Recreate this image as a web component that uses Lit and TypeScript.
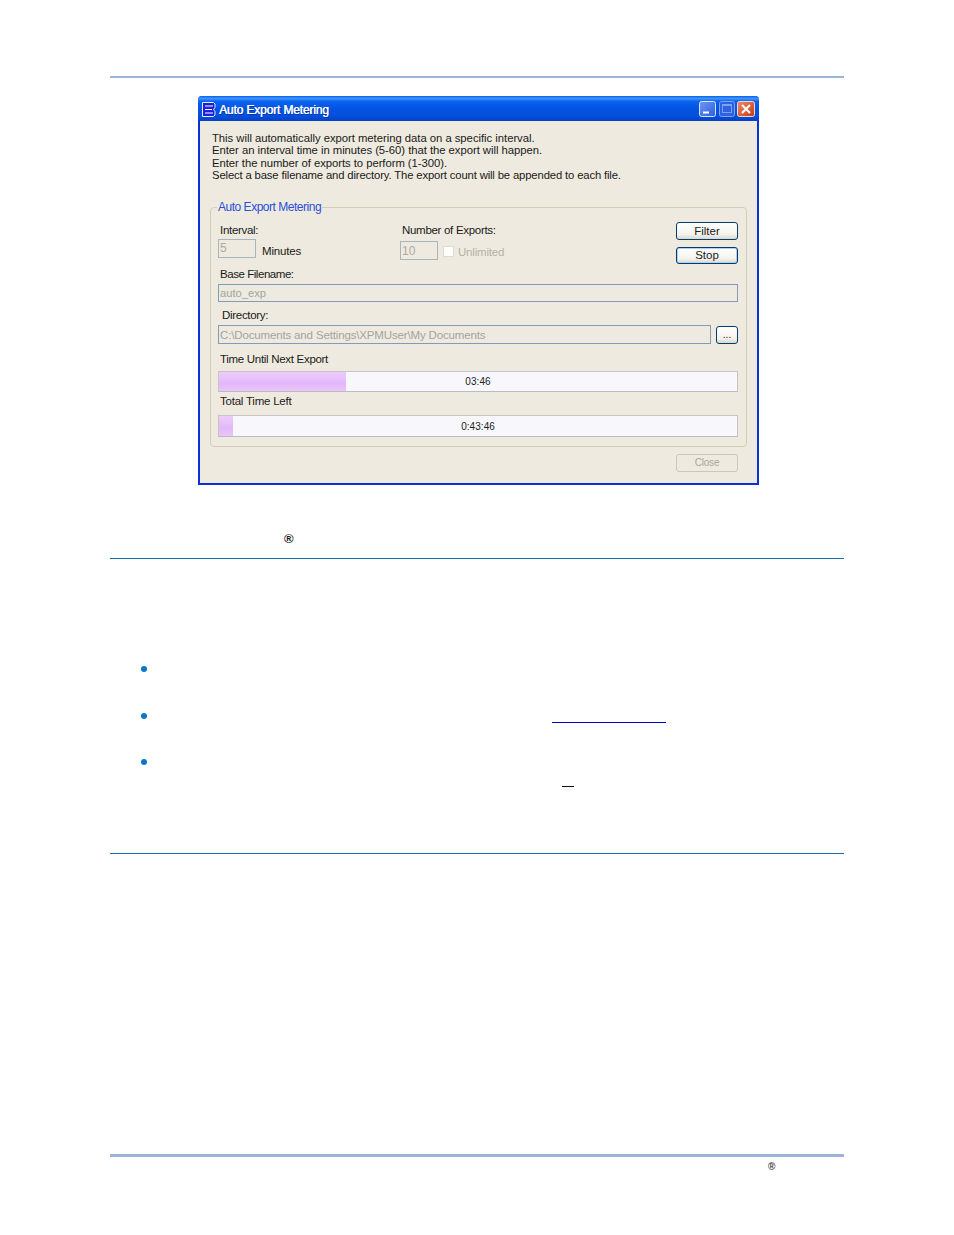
import { LitElement, html, css } from "lit";
import { customElement } from "lit/decorators.js";

@customElement("app-root")
export class AppRoot extends LitElement {
  static styles = css`
    :host { display: block; background: #fff; font-family: "Liberation Sans", Arial, sans-serif; height: 1235px; overflow: hidden; }
    .page { padding: 76px 110px 0; display: flex; flex-direction: column; }
    .rule-top { height: 2px; background: #9ab5d8; }
    .window-wrap { margin-top: 18px; margin-left: 88px; width: 561px; }
    .window { height: 389px; box-sizing: border-box; border: 2px solid #0831d9; border-top: 0; border-radius: 4px 4px 0 0; background: #eeeadf; display: flex; flex-direction: column; }
    .title { height: 25px; box-sizing: border-box; flex: none; margin: 0 -2px; border-radius: 4px 4px 0 0; background: linear-gradient(180deg, #0a5fe8 0%, #3d95ff 10%, #0a62ee 22%, #0454e2 50%, #0350dc 80%, #0340c8 100%); display: flex; align-items: center; padding: 1px 4px 0 4px; color: #fff; font-size: 12px; letter-spacing: -0.15px; }
    .title svg.app { margin-right: 3px; flex: none; }
    .title .t { flex: 1; font-weight: 400; padding-top: 1px; text-shadow: 0.4px 0 0 #fff, 1px 1px 0 #0b2ea8; }
    .wbtns { display: flex; gap: 2px; align-items: center; }
    .wbtns .min { margin-right: 1px; }
    .body { flex: 1; padding: 11px 10px 0; display: flex; flex-direction: column; color: #1a1a1a; font-size: 12px; }
    .intro { margin: 0; padding-left: 2px; font-size: 11.3px; line-height: 12.35px; white-space: nowrap; height: 62px; }
    .intro .l1 { letter-spacing: -0.03px; }
    .intro .l2 { letter-spacing: -0.04px; }
    .intro .l3 { letter-spacing: -0.05px; }
    .intro .l4 { letter-spacing: -0.15px; }
    .group { position: relative; margin-top: 13px; border: 1px solid #d2cfb9; border-radius: 4px; padding: 14px 8px 9px 7px; height: 240px; box-sizing: border-box; }
    .legend { position: absolute; left: 6px; top: -8px; padding: 0 1px; background: #eeeadf; color: #2b4fd8; font-size: 12px; line-height: 14px; letter-spacing: -0.48px; white-space: nowrap; }
    .top { display: flex; height: 42px; }
    .col1 { width: 182px; }
    .col2 { flex: 1; }
    .col3 { width: 62px; display: flex; flex-direction: column; gap: 7px; }
    .lbl { display: block; font-size: 11.5px; line-height: 14px; white-space: nowrap; letter-spacing: -0.3px; }
    .col1 .lbl { margin: 1px 0 0 2px; }
    .col2 .lbl { margin: 1px 0 0 2px; }
    .inline { display: flex; align-items: center; }
    .box { box-sizing: border-box; border: 1px solid #7f9db9; background: #eeeadf; color: #ababa3; font-size: 12px; line-height: 16px; padding-left: 1px; white-space: nowrap; overflow: hidden; }
    .sm { width: 38px; height: 19px; border-color: #a9b5bd; }
    .col1 .inline { margin-top: 1px; }
    .col2 .inline { margin-top: 3px; }
    .col2 .sm { margin-top: 1px; line-height: 18px; }
    .col1 .unit { margin-left: 6px; margin-top: 6px; line-height: 14px; font-size: 11.5px; letter-spacing: -0.15px; }
    .check { margin: 3px 0 0 5px; width: 11px; height: 11px; background: #fff; border: 1px solid #dedbd0; box-sizing: border-box; }
    .unl { margin: 3px 0 0 4px; color: #b5b2a8; font-size: 11.5px; letter-spacing: -0.2px; line-height: 14px; }
    button { box-sizing: border-box; height: 18px; padding: 0; border: 1px solid #003c74; border-radius: 3px; background: linear-gradient(180deg, #fff 0%, #f4f3ee 70%, #dcd8c8 100%); font: 11.5px "Liberation Sans", Arial, sans-serif; color: #1a1a1a; line-height: 14px; }
    button.def { box-shadow: inset 0 0 0 1px #b5cdef; }
    button.off { border-color: #cbc8b5; color: #a8a69c; background: #eeeadf; }
    .base { margin: 3px 0 3px 2px; letter-spacing: -0.45px; }
    .full { height: 18px; width: 100%; font-size: 11.2px; color: #a4a49c; }
    .dirlbl { margin: 6px 0 3px 4px; }
    .dir { display: flex; align-items: flex-start; gap: 5px; }
    .dir .box { height: 19px; flex: 1; letter-spacing: -0.15px; font-size: 11.5px; line-height: 18px; color: #a4a49c; }
    .dir button { width: 22px; margin-top: 1px; font-size: 10px; }
    .t1 { margin: 8px 0 5px 2px; }
    .t2 { margin: 2px 0 7px 2px; letter-spacing: -0.22px; }
    .bar { position: relative; width: 100%; box-sizing: border-box; border: 1px solid #c6c4c4; border-bottom-color: #bcbac4; background: #f8f7fc; display: flex; align-items: center; justify-content: center; font-size: 10px; letter-spacing: 0.05px; color: #222; }
    .bar.a { height: 21px; }
    .bar.b { height: 22px; }
    .fill { position: absolute; left: 0; top: 0; bottom: 0; background: linear-gradient(180deg, #ecccfb 0%, #e6bffa 40%, #e2b6f8 60%, #e9c6fa 100%); }
    .val { position: relative; }
    .foot { display: flex; justify-content: flex-end; padding: 7px 9px 0 0; }
    .foot button { width: 62px; font-size: 10px; letter-spacing: -0.2px; }
    .caption { height: 12px; margin-top: 48px; display: flex; align-items: center; }
    .reg { margin-left: 174px; font-size: 13px; font-weight: 700; line-height: 12px; color: #1c1c1c; }
    .rule { height: 1px; background: #1a6eb0; flex: none; }
    .r1 { margin-top: 13px; }
    .list { margin: 107px 0 0 31px; display: flex; flex-direction: column; }
    .item { height: 46.5px; display: flex; position: relative; }
    .dot { width: 6px; height: 6px; border-radius: 50%; background: #0b75c9; flex: none; }
    .ul1 { position: absolute; left: 411px; top: 9px; width: 114px; height: 1px; background: #0000c8; }
    .ul2 { position: absolute; left: 421px; top: 27px; width: 12px; height: 1px; background: #111; }
    .r2 { margin-top: 47px; }
    .rule-bot { height: 3px; background: #9ab5d8; margin-top: 300px; }
    .foot-reg { margin: 5px 0 0 658px; font-size: 10px; font-weight: 700; line-height: 10px; color: #444; }
  `;

  render() {
    return html`<div class="page">
      <div class="rule-top"></div>
      <div class="window-wrap">
        <div class="window">
          <div class="title">
            <svg class="app" width="14" height="15" viewBox="0 0 14 15">
              <path d="M0.5 0.5H11.5L13 2V5.5L11.5 7.5L13 9.5V13L11.5 14.5H0.5Z" fill="#1c1ee0" stroke="#e8ecff" stroke-width="1"/>
              <path d="M3 4H11M3 7.5H10M3 11H11" stroke="#fff" stroke-width="1" fill="none"/>
            </svg>
            <span class="t">Auto Export Metering</span>
            <div class="wbtns">
              <svg class="min" width="17" height="16" viewBox="0 0 17 16">
                <defs><linearGradient id="g1" x1="0" y1="0" x2="1" y2="1"><stop offset="0" stop-color="#6f97f2"/><stop offset="1" stop-color="#2a5fe0"/></linearGradient></defs>
                <rect x="0.5" y="0.5" width="16" height="15" rx="2" fill="url(#g1)" stroke="#d8e4fb"/>
                <rect x="4" y="10.5" width="6" height="2" fill="#fff"/>
              </svg>
              <svg width="16" height="16" viewBox="0 0 16 16">
                <rect x="0.5" y="0.5" width="15" height="15" rx="2" fill="#2e62e2" stroke="#7fa0ec"/>
                <rect x="3.5" y="3.5" width="9" height="8" fill="none" stroke="#7fa0ec"/>
                <rect x="3" y="3" width="10" height="2" fill="#7fa0ec"/>
              </svg>
              <svg width="18" height="16" viewBox="0 0 18 16">
                <defs><linearGradient id="g2" x1="0" y1="0" x2="1" y2="1"><stop offset="0" stop-color="#eb8a6c"/><stop offset="1" stop-color="#c93a12"/></linearGradient></defs>
                <rect x="0.5" y="0.5" width="17" height="15" rx="2" fill="url(#g2)" stroke="#f0d6cc"/>
                <path d="M5 4L13 12M13 4L5 12" stroke="#fff" stroke-width="2.2" fill="none"/>
              </svg>
            </div>
          </div>
          <div class="body">
            <p class="intro"><span class="l1">This will automatically export metering data on a specific interval.</span><br><span class="l2">Enter an interval time in minutes (5-60) that the export will happen.</span><br><span class="l3">Enter the number of exports to perform (1-300).</span><br><span class="l4">Select a base filename and directory. The export count will be appended to each file.</span></p>
            <div class="group">
              <div class="legend">Auto Export Metering</div>
              <div class="top">
                <div class="col1">
                  <div class="lbl">Interval:</div>
                  <div class="inline"><div class="box sm">5</div><span class="unit">Minutes</span></div>
                </div>
                <div class="col2">
                  <div class="lbl">Number of Exports:</div>
                  <div class="inline"><div class="box sm">10</div><div class="check"></div><span class="unl">Unlimited</span></div>
                </div>
                <div class="col3">
                  <button>Filter</button>
                  <button class="def">Stop</button>
                </div>
              </div>
              <div class="lbl base">Base Filename:</div>
              <div class="box full">auto_exp</div>
              <div class="lbl dirlbl">Directory:</div>
              <div class="dir">
                <div class="box">C:\\Documents and Settings\\XPMUser\\My Documents</div>
                <button>...</button>
              </div>
              <div class="lbl t1">Time Until Next Export</div>
              <div class="bar a"><div class="fill" style="width:127px"></div><span class="val">03:46</span></div>
              <div class="lbl t2">Total Time Left</div>
              <div class="bar b"><div class="fill" style="width:14px"></div><span class="val">0:43:46</span></div>
            </div>
            <div class="foot"><button class="off">Close</button></div>
          </div>
        </div>
      </div>
      <div class="caption"><span class="reg">®</span></div>
      <div class="rule r1"></div>
      <div class="list">
        <div class="item"><div class="dot"></div></div>
        <div class="item"><div class="dot"></div><div class="ul1"></div></div>
        <div class="item"><div class="dot"></div><div class="ul2"></div></div>
      </div>
      <div class="rule r2"></div>
      <div class="rule-bot"></div>
      <div class="foot-reg">®</div>
    </div>`;
  }
}
